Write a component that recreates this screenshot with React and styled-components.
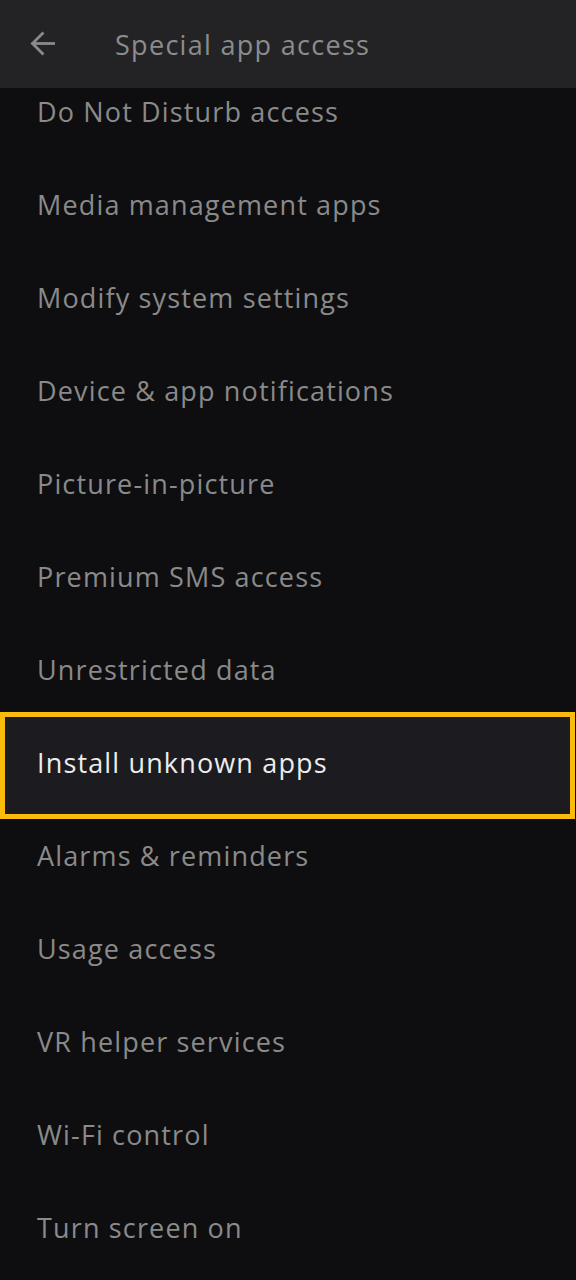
import React from "react";
import styled, { createGlobalStyle } from "styled-components";

const Global = createGlobalStyle`
  html, body { margin: 0; padding: 0; background: #0e0e10; }
  body { font-family: "Open Sans", Roboto, sans-serif; }
`;

const Screen = styled.div`
  width: 576px;
  height: 1280px;
  background: #0e0e10;
  display: flex;
  flex-direction: column;
  overflow: hidden;
`;

const Header = styled.header`
  height: 88px;
  flex: none;
  background: #232325;
  display: flex;
  align-items: center;
  padding-left: 30px;
  gap: 60px;
  position: relative;
  z-index: 1;
`;

const BackButton = styled.span`
  display: flex;
  width: 25px;
  height: 25px;
  margin-top: -2px;
`;

const Title = styled.h1`
  margin: 0;
  font-weight: 400;
  font-size: 27px;
  letter-spacing: 1.3px;
  color: #8c8c8c;
`;

const Viewport = styled.div`
  flex: 1;
  overflow: hidden;
`;

const List = styled.ul`
  list-style: none;
  margin: -23px 0 0;
  padding: 0;
`;

const Row = styled.li`
  height: 93px;
  display: flex;
  align-items: center;
  padding-left: ${p => (p.$active ? 32 : 37)}px;
  font-size: 27px;
  letter-spacing: 1.15px;
  color: ${p => (p.$active ? "#ececec" : "#8a8a8a")};
  box-sizing: border-box;
  ${p =>
    p.$active &&
    `
    height: 107px;
    margin: -4px 1px -10px 0;
    border: 5px solid #fbbb0d;
    background: #1c1b20;
    padding-bottom: 6px;
  `}
`;

const items = [
  "Do Not Disturb access",
  "Media management apps",
  "Modify system settings",
  "Device & app notifications",
  "Picture-in-picture",
  "Premium SMS access",
  "Unrestricted data",
  "Install unknown apps",
  "Alarms & reminders",
  "Usage access",
  "VR helper services",
  "Wi-Fi control",
  "Turn screen on",
];

export default function App() {
  return (
    <Screen>
      <Global />
      <Header>
        <BackButton>
          <svg width="25" height="25" viewBox="0 0 25 25" fill="none" stroke="#8a8a8a" strokeWidth="2.8" strokeLinecap="square">
            <path d="M24 12.5H3" />
            <path d="M12.5 2.5L2.5 12.5L12.5 22.5" />
          </svg>
        </BackButton>
        <Title>Special app access</Title>
      </Header>
      <Viewport>
        <List>
          {items.map(t => (
            <Row key={t} $active={t === "Install unknown apps"}>
              {t}
            </Row>
          ))}
        </List>
      </Viewport>
    </Screen>
  );
}
